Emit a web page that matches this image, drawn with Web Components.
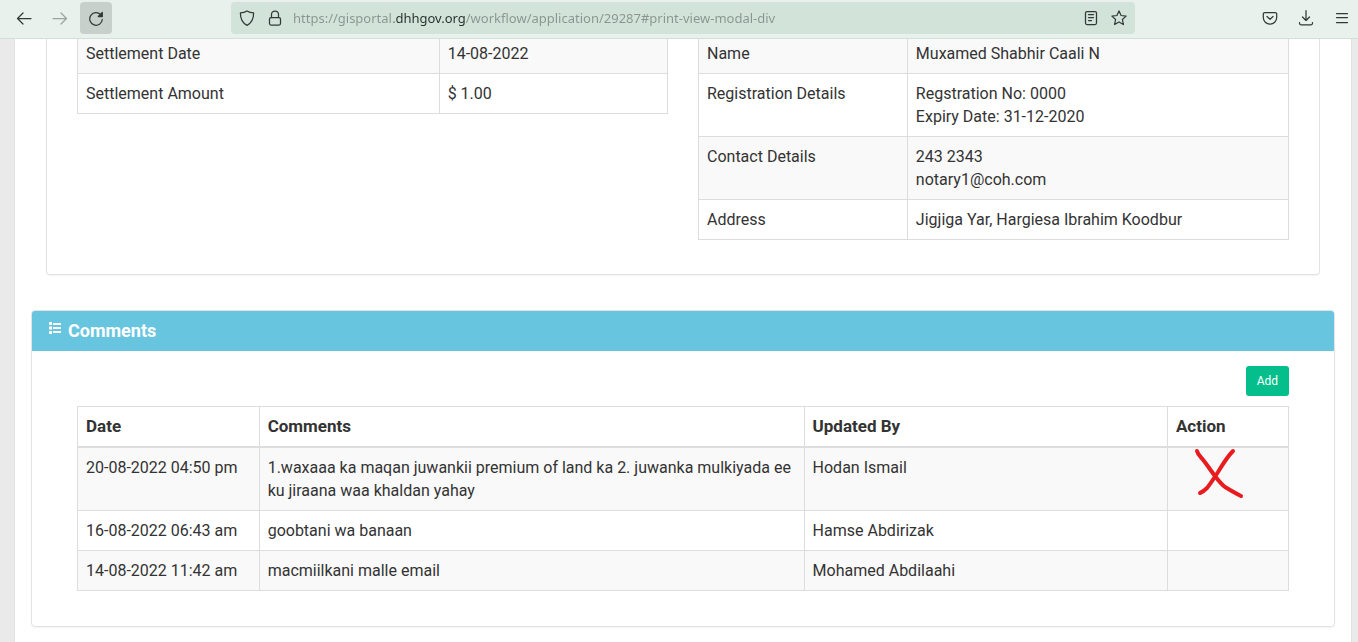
<!DOCTYPE html>
<html lang="en">
<head>
<meta charset="utf-8">
<title>Application 29287</title>
<style>
  html, body { margin: 0; height: 100%; }
  body { font: 16px/23px Roboto, sans-serif; color: #333; background: #eaeaea; overflow: hidden; }
</style>
</head>
<body>
<app-window>
  <browser-toolbar slot="toolbar"></browser-toolbar>
  <details-card>
    <record-table data-source="settlement"></record-table>
    <record-table data-source="notary"></record-table>
  </details-card>
  <titled-panel heading="Comments">
    <add-button slot="actions">Add</add-button>
    <record-table data-source="comments"></record-table>
  </titled-panel>
</app-window>

<script>
const define = (name, markup, setup) => {
  const template = document.createElement('template');
  template.innerHTML = markup;
  customElements.define(name, class extends HTMLElement {
    constructor() {
      super();
      this.attachShadow({ mode: 'open' }).append(template.content.cloneNode(true));
    }
    connectedCallback() { if (setup) setup(this, this.shadowRoot); }
  });
};

define('app-window', `
  <style>
    :host { display: flex; flex-direction: column; height: 100%; }
    main { flex: 1; min-height: 0; overflow: hidden; padding: 0 7px 0 15px; }
    .page { box-sizing: border-box; min-height: 100%; background: #fff; padding: 0 16px 16px; box-shadow: 0 0 1px #bbb; display: flow-root; }
  </style>
  <slot name="toolbar"></slot>
  <main><div class="page"><slot></slot></div></main>`);

define('browser-toolbar', `
  <style>
    :host { display: block; background: #e8f1ec; border-bottom: 1px solid #d0e2d8; position: relative; }
    nav { display: grid; grid-template-columns: auto 119fr 904fr 119fr auto; padding: 2px 0 4px 8px; }
    .group { display: flex; gap: 4px; }
    .tools { grid-column: 5; }
    button { width: 32px; height: 32px; padding: 0; border: 0; border-radius: 4px; background: none; color: #333a36; display: grid; place-items: center; }
    button:disabled { color: #9ba5a0; }
    .active { background: #c8d0cc; }
    svg { display: block; width: 16px; height: 16px; fill: none; stroke: currentColor; stroke-width: 1.25; stroke-linecap: round; stroke-linejoin: round; }
    .address { grid-column: 3; display: flex; align-items: center; height: 32px; box-sizing: border-box; border-radius: 4px; background: #d2e3d9; padding: 0 2px; }
    .address button { width: 28px; height: 28px; }
    input { flex: 1; min-width: 0; height: 24px; border: 0; padding: 0; margin-left: 4px; outline: 0; font: 13px/24px "Noto Sans", sans-serif; color: #89958e;
      background: linear-gradient(90deg, #89958e 101px, #26302a 101px, #26302a 172px, #89958e 172px);
      -webkit-background-clip: text; background-clip: text; -webkit-text-fill-color: transparent; }
  </style>
  <nav aria-label="Browser">
    <div class="group">
      <button aria-label="Back"><svg viewBox="0 0 16 16"><path d="M15 8.500H1.500M7 3 1.500 8.500 7 14"/></svg></button>
      <button aria-label="Forward" disabled><svg viewBox="0 0 16 16"><path d="M1 8.500h13.500M9 3l5.500 5.500L9 14"/></svg></button>
      <button aria-label="Reload" class="active"><svg viewBox="0 0 16 16"><path d="M12.500 4.500A6.300 6.300 0 1 0 14.300 9.500"/><path d="M14.300 2.500v4h-4z" fill="currentColor"/></svg></button>
    </div>
    <div class="address">
      <button aria-label="Tracking protection"><svg viewBox="0 0 16 16"><path d="M8 .9c2 1.300 4.200 1.900 6.600 2C14.700 8.500 13 12.800 8 15.400 3 12.800 1.300 8.500 1.400 2.900 3.800 2.800 6 2.200 8 .9z"/></svg></button>
      <button aria-label="Connection"><svg viewBox="0 0 16 16"><rect x="2.500" y="7.500" width="11" height="7.500" rx="1.500"/><path d="M4.500 7.500V4.500a3.500 3.500 0 0 1 7 0v3"/></svg></button>
      <input type="text" aria-label="Address" spellcheck="false" value="https://gisportal.dhhgov.org/workflow/application/29287#print-view-modal-div">
      <button aria-label="Reader view"><svg viewBox="0 0 16 16"><rect x="2.500" y="1.500" width="11" height="13" rx="1.500"/><path d="M5.500 4.500h5M5.500 7.500h5M5.500 10.500h3"/></svg></button>
      <button aria-label="Bookmark"><svg viewBox="0 0 16 16"><path d="m8 .9 2.100 4.600 5 .6-3.700 3.400 1 5L8 12l-4.400 2.500 1-5L.9 6.100l5-.6z"/></svg></button>
    </div>
    <div class="group tools">
      <button aria-label="Pocket"><svg viewBox="0 0 16 16"><path d="M2.800 2.500h10.400a1.500 1.500 0 0 1 1.500 1.500v3.500a6.700 6.700 0 0 1-13.400 0V4a1.500 1.500 0 0 1 1.500-1.500z"/><path d="m5 6.500 3 2.800 3-2.800"/></svg></button>
      <button aria-label="Downloads"><svg viewBox="0 0 16 16"><path d="M8 .7v9.800M4.500 7 8 10.500 11.500 7M1.500 12.500v.8a1.500 1.500 0 0 0 1.500 1.500h10a1.500 1.500 0 0 0 1.500-1.500v-.8"/></svg></button>
      <button aria-label="Menu"><svg viewBox="0 0 16 16"><path d="M2.500 3.500h11M2.500 7.500h11M2.500 12.500h11"/></svg></button>
    </div>
  </nav>`);

define('details-card', `
  <style>
    :host { display: grid; grid-template-columns: 1fr 1fr; gap: 30px; align-items: start; margin: -6px 15px 35px; padding: 0 30px 34px;
      border: 1px solid #e3e3e3; border-top: 0; border-radius: 0 0 4px 4px; box-shadow: 0 1px 1px rgba(0,0,0,.05); }
  </style>
  <slot></slot>`);

define('titled-panel', `
  <style>
    :host { display: block; border: 1px solid #e3e3e3; border-radius: 4px; box-shadow: 0 1px 1px rgba(0,0,0,.05); }
    header { display: flex; gap: 7px; height: 40px; padding: 0 17px; background: #67c5df; color: #fff; border-radius: 3px 3px 0 0; }
    svg { width: 12px; height: 12px; margin-top: 11px; fill: currentColor; }
    h2 { margin: 0; font-size: 18px; line-height: 40px; font-weight: 700; }
    .body { padding: 15px 45px 35px; }
    .actions { display: flex; justify-content: flex-end; margin-bottom: 10px; }
  </style>
  <header>
    <svg viewBox="0 0 12 12" aria-hidden="true"><path d="M0 0h3v3H0zM0 4.500h3v3H0zM0 9h3v3H0zM4 1h8v2H4zM4 5h8v2H4zM4 9h8v2H4z"/></svg>
    <h2></h2>
  </header>
  <div class="body">
    <div class="actions"><slot name="actions"></slot></div>
    <slot></slot>
  </div>`, (host, root) => {
    root.querySelector('h2').textContent = host.getAttribute('heading');
  });

define('add-button', `
  <style>
    :host { display: block; }
    button { height: 30px; padding: 0 11px; border: 0; border-radius: 3px; background: #04be8c; color: #fff; font: 12px/30px Roboto, sans-serif; }
  </style>
  <button type="button"><slot></slot></button>`);

define('ink-cross', `
  <style>
    :host { display: block; position: absolute; left: 25px; top: 0; }
    svg { display: block; width: 52px; height: 54px; fill: none; stroke: #e81b1f; stroke-width: 4; stroke-linecap: round; stroke-linejoin: round; }
  </style>
  <svg viewBox="0 0 52 54" role="img" aria-label="Crossed out"><path d="M4 3c1 4 4 6 7 10 4 5 7 10 11 15 3 4 6 8 10 11 5 3 10 6 16 9M40 3c-6 6-10 13-15 21-4 6-7 11-11 16-2 2-4 4-7 5"/></svg>`);

const sources = {
  settlement: {
    label: 'Settlement', widths: ['61.300%', ''],
    rows: [['Settlement Date', '14-08-2022'], ['Settlement Amount', '$ 1.00']]
  },
  notary: {
    label: 'Notary', widths: ['35.400%', ''],
    rows: [
      ['Name', 'Muxamed Shabhir Caali N'],
      ['Registration Details', 'Regstration No: 0000<br>Expiry Date: 31-12-2020'],
      ['Contact Details', '243 2343<br>notary1@coh.com'],
      ['Address', 'Jigjiga Yar, Hargiesa Ibrahim Koodbur']
    ]
  },
  comments: {
    label: 'Comments', widths: ['15%', '45%', '30%', '10%'],
    head: ['Date', 'Comments', 'Updated By', 'Action'],
    rows: [
      ['20-08-2022 04:50 pm', '1.waxaaa ka maqan juwankii premium of land ka 2. juwanka mulkiyada ee ku jiraana waa khaldan yahay', 'Hodan Ismail', '<ink-cross></ink-cross>'],
      ['16-08-2022 06:43 am', 'goobtani wa banaan', 'Hamse Abdirizak', ''],
      ['14-08-2022 11:42 am', 'macmiilkani malle email', 'Mohamed Abdilaahi', '']
    ]
  }
};

define('record-table', `
  <style>
    :host { display: block; }
    table { width: 100%; table-layout: fixed; border-collapse: collapse; }
    th, td { position: relative; border: 1px solid #ddd; padding: 8px; text-align: left; vertical-align: top; }
    th { font-size: 17px; font-weight: 700; border-bottom-width: 2px; }
    tbody tr:nth-child(odd) { background: #f9f9f9; }
  </style>
  <table></table>`, (host, root) => {
    const { label, widths, head, rows } = sources[host.dataset.source];
    const table = root.querySelector('table');
    table.setAttribute('aria-label', label);
    table.innerHTML =
      '<colgroup>' + widths.map(w => `<col style="width:${w || 'auto'}">`).join('') + '</colgroup>' +
      (head ? '<thead><tr>' + head.map(h => `<th scope="col">${h}</th>`).join('') + '</tr></thead>' : '') +
      '<tbody>' + rows.map(r => '<tr>' + r.map(c => `<td>${c}</td>`).join('') + '</tr>').join('') + '</tbody>';
  });
</script>
</body>
</html>
